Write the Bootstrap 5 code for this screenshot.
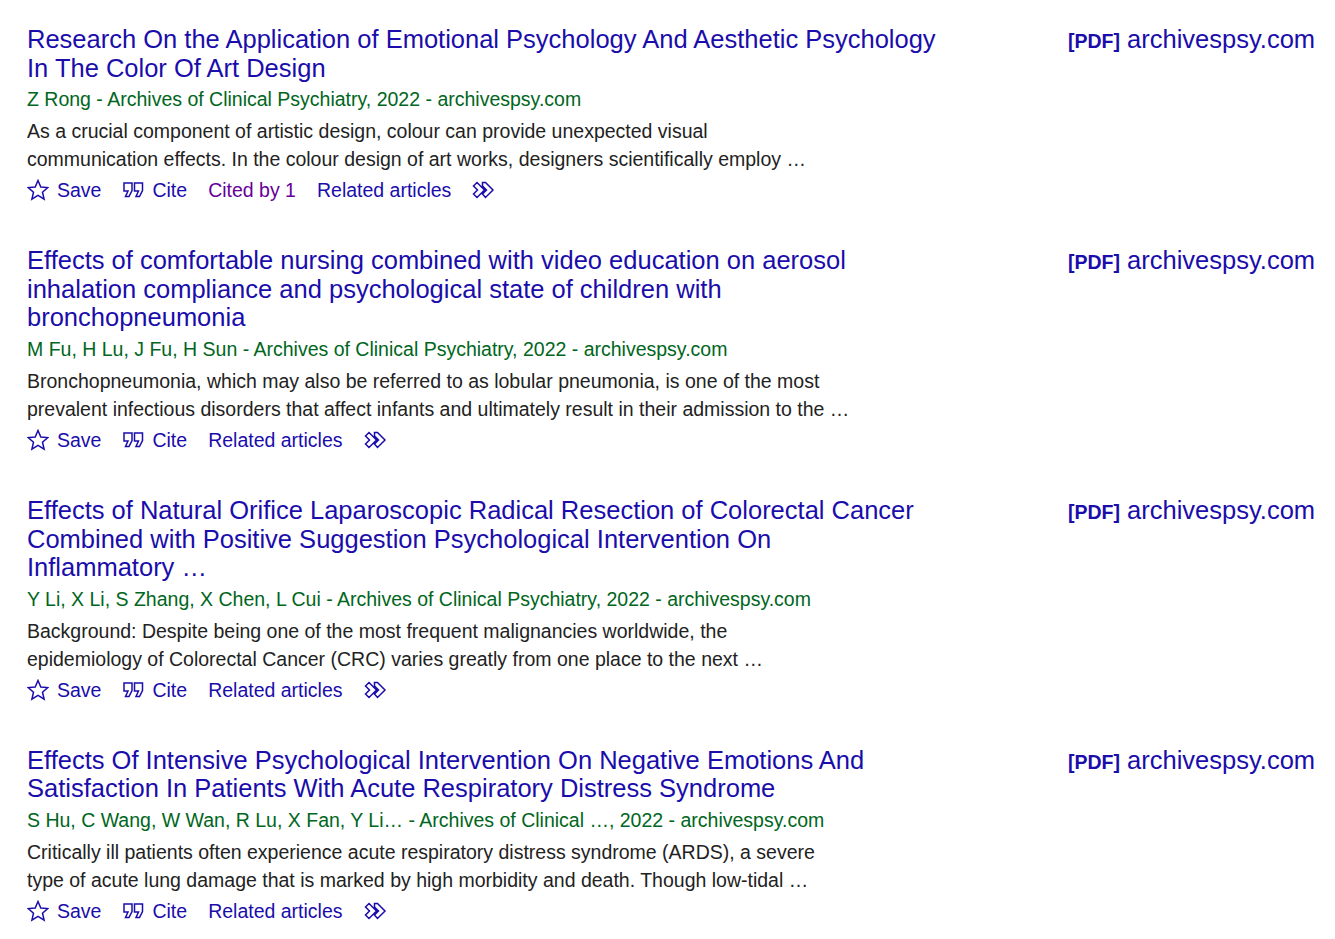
<!DOCTYPE html>
<html lang="en">
<head>
  <meta charset="UTF-8">
  <meta name="viewport" content="width=device-width, initial-scale=1.0">
  <title>Scholar results</title>
  <link href="https://cdn.jsdelivr.net/npm/bootstrap@5.3.0/dist/css/bootstrap.min.css" rel="stylesheet">
  <style>
    body {
      background-color: #fff;
      font-family: "Liberation Sans", Arial, sans-serif;
      padding: 25px 20px 0 27px;
    }
    a { color: #1a0dab; text-decoration: none; }
    .hit { margin-bottom: 43px; }
    .hit-main { width: 915px; }
    .hit-title { font-size: 25.5px; line-height: 28.6px; font-weight: 400; margin: 0; }
    .hit-meta { font-size: 19.5px; line-height: 26px; color: #006621; margin-top: 4px; }
    .hit-snippet { font-size: 19.5px; line-height: 28px; color: #222; margin-top: 5px; }
    .hit-actions { font-size: 19.5px; line-height: 26px; margin-top: 4px; gap: 21px; }
    .hit-actions a { display: flex; align-items: center; }
    .hit-actions svg { fill: none; stroke: #1a0dab; stroke-width: 1.5; flex-shrink: 0; }
    .hit-actions .visited { color: #609; }
    .ic-star { width: 22px; height: 22px; margin-right: 8px; }
    .ic-cite { width: 22px; height: 22px; margin-right: 8px; }
    .ic-more { width: 24px; height: 22px; }
    .hit-side { font-size: 25.5px; line-height: 28.6px; width: 247px; white-space: nowrap; }
    .hit-side b { font-size: 19.5px; font-weight: 700; }
  </style>
</head>
<body>

<svg class="d-none">
  <symbol id="star" viewBox="0 0 22 22"><path d="M11 1.500l2.800 6.500 7 .6-5.300 4.600 1.600 6.900-6.100-3.700-6.100 3.700 1.600-6.900-5.300-4.600 7-.6z"/></symbol>
  <symbol id="cite" viewBox="0 0 22 22"><path d="M2 4h8v7.500l-3 6H3.500l2.500-5.500H2zM12.500 4h8v7.500l-3 6H14l2.500-5.500h-4z"/></symbol>
  <symbol id="more" viewBox="0 0 24 22"><path d="M1.500 7L5 3.500 12.500 11 5 18.500 1.500 15 5.500 11zM10.500 3.500l3-0 7.500 7.500-7.500 7.500-3-3.500 4-4-4-4z"/></symbol>
</svg>

<div id="results"></div>

<script>
  const hits = [
    {
      title: 'Research On the Application of Emotional Psychology And Aesthetic Psychology In The Color Of Art Design',
      meta: 'Z Rong - Archives of Clinical Psychiatry, 2022 - archivespsy.com',
      snippet: 'As a crucial component of artistic design, colour can provide unexpected visual<br>communication effects. In the colour design of art works, designers scientifically employ …',
      cited: 'Cited by 1'
    },
    {
      title: 'Effects of comfortable nursing combined with video education on aerosol inhalation compliance and psychological state of children with bronchopneumonia',
      meta: 'M Fu, H Lu, J Fu, H Sun - Archives of Clinical Psychiatry, 2022 - archivespsy.com',
      snippet: 'Bronchopneumonia, which may also be referred to as lobular pneumonia, is one of the most<br>prevalent infectious disorders that affect infants and ultimately result in their admission to the …'
    },
    {
      title: 'Effects of Natural Orifice Laparoscopic Radical Resection of Colorectal Cancer Combined with Positive Suggestion Psychological Intervention On Inflammatory&nbsp;…',
      meta: 'Y Li, X Li, S Zhang, X Chen, L Cui - Archives of Clinical Psychiatry, 2022 - archivespsy.com',
      snippet: 'Background: Despite being one of the most frequent malignancies worldwide, the<br>epidemiology of Colorectal Cancer (CRC) varies greatly from one place to the next …'
    },
    {
      title: 'Effects Of Intensive Psychological Intervention On Negative Emotions And Satisfaction In Patients With Acute Respiratory Distress Syndrome',
      meta: 'S Hu, C Wang, W Wan, R Lu, X Fan, Y Li… - Archives of Clinical …, 2022 - archivespsy.com',
      snippet: 'Critically ill patients often experience acute respiratory distress syndrome (ARDS), a severe<br>type of acute lung damage that is marked by high morbidity and death. Though low-tidal …'
    }
  ];

  document.getElementById('results').innerHTML = hits.map(hit => `
    <div class="hit d-flex justify-content-between">
      <div class="hit-main">
        <h3 class="hit-title"><a href="#">${hit.title}</a></h3>
        <div class="hit-meta">${hit.meta}</div>
        <div class="hit-snippet">${hit.snippet}</div>
        <div class="hit-actions d-flex">
          <a href="#"><svg class="ic-star"><use href="#star"/></svg>Save</a>
          <a href="#"><svg class="ic-cite"><use href="#cite"/></svg>Cite</a>
          ${hit.cited ? `<a href="#" class="visited">${hit.cited}</a>` : ''}
          <a href="#">Related articles</a>
          <a href="#"><svg class="ic-more"><use href="#more"/></svg></a>
        </div>
      </div>
      <div class="hit-side"><a href="#"><b>[PDF]</b> archivespsy.com</a></div>
    </div>`).join('');
</script>
<script src="https://cdn.jsdelivr.net/npm/bootstrap@5.3.0/dist/js/bootstrap.bundle.min.js"></script>
</body>
</html>
